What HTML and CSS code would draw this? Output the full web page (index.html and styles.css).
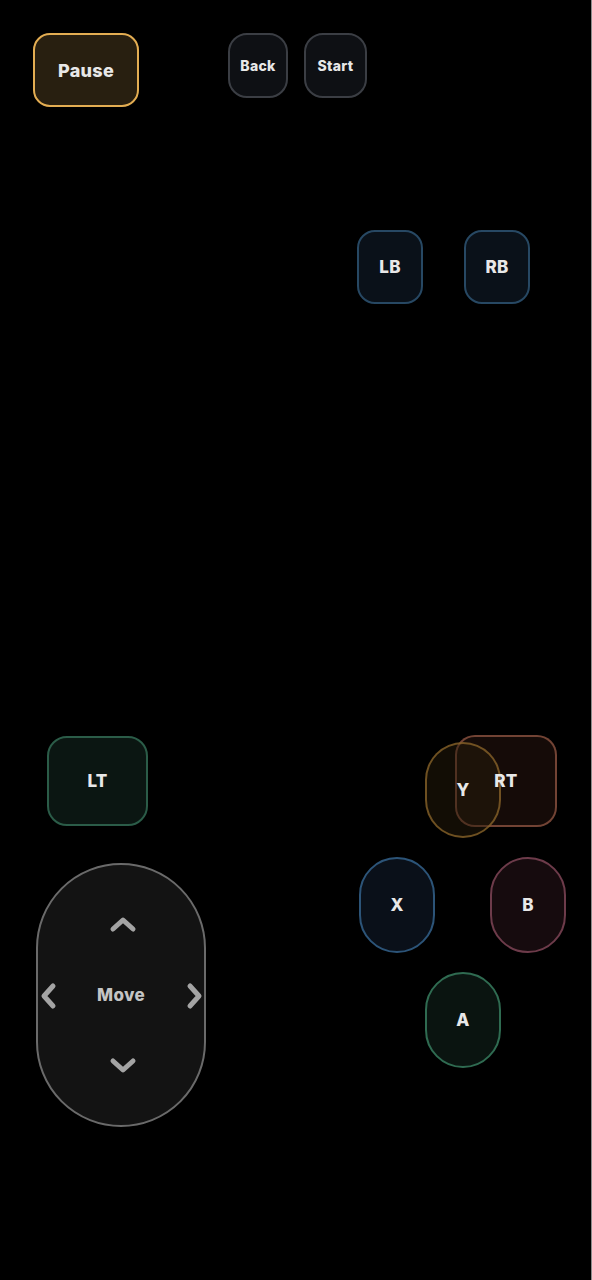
FILE: index.html
```html
<!DOCTYPE html>
<html lang="en">
<head>
  <meta charset="UTF-8">
  <meta name="viewport" content="width=device-width, initial-scale=1.0">
  <title>Gamepad</title>
  <link rel="stylesheet" href="styles.css">
</head>
<body>
  <div class="overlay">
    <button class="key pause"><span class="label">Pause</span></button>
    <button class="key small back"><span class="label">Back</span></button>
    <button class="key small start"><span class="label">Start</span></button>

    <button class="key bumper lb"><span class="label">LB</span></button>
    <button class="key bumper rb"><span class="label">RB</span></button>

    <button class="key trigger lt"><span class="label">LT</span></button>
    <button class="key trigger rt"><span class="label">RT</span></button>
    <button class="key face y"><span class="label">Y</span></button>

    <button class="key face x"><span class="label">X</span></button>
    <button class="key face b"><span class="label">B</span></button>
    <button class="key face a"><span class="label">A</span></button>

    <div class="stick">
      <svg class="arrow up" width="30" height="18" viewBox="0 0 30 18"><path d="M5 14 L15 5 L25 14" /></svg>
      <svg class="arrow down" width="30" height="18" viewBox="0 0 30 18"><path d="M5 4 L15 13 L25 4" /></svg>
      <svg class="arrow left" width="18" height="30" viewBox="0 0 18 30"><path d="M14 5 L5 15 L14 25" /></svg>
      <svg class="arrow right" width="18" height="30" viewBox="0 0 18 30"><path d="M4 5 L13 15 L4 25" /></svg>
      <span class="stick-label">Move</span>
    </div>
  </div>
</body>
</html>
```

FILE: styles.css
```css
html {
  background-color: #000;
}
body {
  margin: 0;
  width: 591px;
  height: 1280px;
  border-right: 1px solid #8c8c8c;
  background-color: #000;
  font-family: Inter, "Noto Sans", sans-serif;
}
.overlay {
  position: relative;
  width: 100%;
  height: 100%;
}
.key {
  position: absolute;
  display: flex;
  justify-content: center;
  align-items: center;
  box-sizing: border-box;
  padding: 0;
  border: 2px solid #3b3e44;
  border-radius: 18px;
  background-color: #0e1014;
  color: #e8e8e8;
  font-family: inherit;
  font-size: 17px;
  font-weight: 800;
  letter-spacing: 0.3px;
}
/* labels sit above every button face so overlapping keys stay readable */
.label {
  position: relative;
  z-index: 1;
}
.pause {
  left: 33px;
  top: 33px;
  width: 106px;
  height: 74px;
  border-radius: 17px;
  border-color: #e3ad52;
  background-color: #281f10;
  font-size: 18px;
}
.small {
  top: 33px;
  height: 65px;
  font-size: 14px;
  border-radius: 19px;
}
.back {
  left: 228px;
  width: 60px;
}
.start {
  left: 304px;
  width: 63px;
}
.bumper {
  top: 230px;
  width: 66px;
  height: 74px;
  border-color: #274863;
  background-color: #0a1119;
}
.lb {
  left: 357px;
}
.rb {
  left: 464px;
}
.trigger {
  width: 101px;
  height: 90px;
  border-radius: 20px;
}
.lt {
  left: 47px;
  top: 736px;
  border-color: #2b5c48;
  background-color: #0b1612;
}
.rt {
  left: 455px;
  top: 735px;
  width: 102px;
  height: 92px;
  border-color: rgba(130, 78, 60, 0.85);
  background-color: rgba(30, 16, 12, 0.7);
}
.face {
  width: 76px;
  height: 96px;
  border-radius: 38px;
}
.y {
  left: 425px;
  top: 742px;
  border-color: rgba(150, 110, 45, 0.7);
  background-color: rgba(40, 28, 10, 0.45);
}
.x {
  left: 359px;
  top: 857px;
  border-color: #2c5478;
  background-color: #0a1019;
}
.b {
  left: 490px;
  top: 857px;
  border-color: #6d3b4a;
  background-color: #160b0e;
}
.a {
  left: 425px;
  top: 972px;
  border-color: #2f6b51;
  background-color: #0a1410;
}
.stick {
  position: absolute;
  left: 36px;
  top: 863px;
  width: 170px;
  height: 264px;
  box-sizing: border-box;
  border: 2px solid #6a6a6a;
  border-radius: 85px;
  background-color: #131313;
  display: flex;
  justify-content: center;
  align-items: center;
}
.stick-label {
  color: #c4c4c4;
  font-size: 17px;
  font-weight: 800;
  letter-spacing: 0.3px;
}
.arrow {
  position: absolute;
}
.arrow path {
  fill: none;
  stroke: #a4a4a4;
  stroke-width: 5;
  stroke-linecap: round;
  stroke-linejoin: round;
}
.up {
  left: 70px;
  top: 50px;
}
.down {
  left: 70px;
  top: 192px;
}
.left {
  left: 1px;
  top: 116px;
}
.right {
  left: 148px;
  top: 116px;
}
```
